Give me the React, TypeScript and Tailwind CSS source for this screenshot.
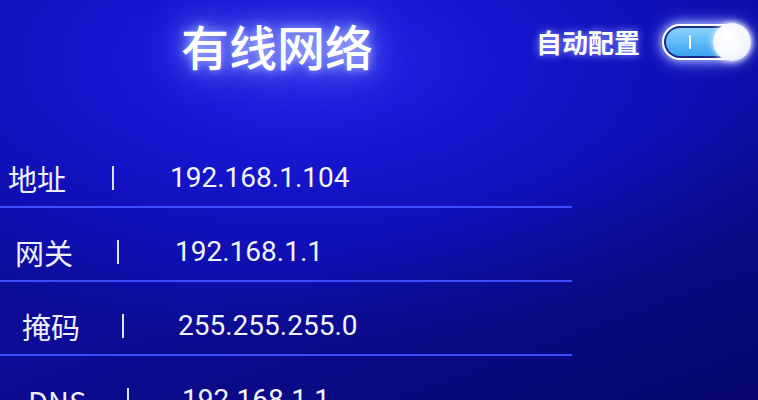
import React from "react";

const rows = [
  { label: "地址", value: "192.168.1.104", lw: "w-[112px]", lp: "pl-[8px]", vp: "pl-[56px]" },
  { label: "网关", value: "192.168.1.1", lw: "w-[117px]", lp: "pl-[15px]", vp: "pl-[56px]" },
  { label: "掩码", value: "255.255.255.0", lw: "w-[122px]", lp: "pl-[22px]", vp: "pl-[54px]" },
  { label: "DNS", value: "192.168.1.1", lw: "w-[127px]", lp: "pl-[28px]", vp: "pl-[53px]" },
];

export default function App() {
  return (
    <div
      className="relative w-[758px] h-[400px] overflow-hidden text-white bg-[radial-gradient(ellipse_75%_70%_at_40%_15%,#2828e6_0%,#1616d0_35%,#1010b8_65%,#0c0c96_100%)]"
      style={{ fontFamily: '"Noto Sans CJK SC", Roboto, "Noto Sans", sans-serif' }}
    >
      <div className="absolute inset-0 bg-[linear-gradient(160deg,rgba(0,0,0,0)_55%,rgba(0,0,50,0.4)_100%)]" />

      <div className="relative">
        {/* header */}
        <div className="flex items-start h-[150px]">
          <div className="w-[530px] flex justify-center pt-[12px] pl-[24px]">
            <span className="text-[48px] leading-[66px] font-medium tracking-[0px] [text-shadow:0_0_10px_#aab8ff,0_0_24px_#8090ff,0_0_44px_#6070ff]">
              有线网络
            </span>
          </div>
          <div className="flex items-center pt-[24px] pl-[6px] gap-[22px]">
            <span className="text-[26px] leading-[36px] font-bold [text-shadow:0_0_8px_#9aa8ff]">
              自动配置
            </span>
            <div className="relative w-[88px] h-[36px] rounded-full bg-white p-[2px] shadow-[0_0_10px_#b8c4ff,0_0_18px_#8090ff]">
              <div className="w-full h-full rounded-full bg-[#1a2a8a] p-[2px]">
                <div className="w-full h-full rounded-full bg-[linear-gradient(180deg,#8ad4ff,#3aa0f0)] flex items-center pl-[23px]">
                  <div className="w-[2px] h-[14px] bg-white rounded" />
                </div>
              </div>
              <div className="absolute right-[-1px] top-[-1px] w-[38px] h-[38px] rounded-full bg-[radial-gradient(circle_at_40%_40%,#ffffff_0%,#f4f6ff_60%,#d8dcf0_100%)] shadow-[0_0_6px_#ffffff]" />
            </div>
          </div>
        </div>

        {/* rows */}
        <div className="w-[572px] flex flex-col">
          {rows.map((r, i) => (
            <div key={i} className="flex flex-col">
              <div className="flex items-center h-[56px]">
                <span className={`${r.lw} ${r.lp} text-[29px] leading-[34px] text-[#eef0ff]`}>
                  {r.label}
                </span>
                <span className="w-[2px] h-[24px] bg-[#dde2ff]" />
                <span
                  className={`${r.vp} text-[28px] leading-[34px] text-[#f2f4ff]`}
                  style={{ fontFamily: 'Roboto, "Noto Sans", sans-serif' }}
                >
                  {r.value}
                </span>
              </div>
              {i < 3 && <div className="h-[2px] bg-[#3d4cff] mb-[16px]" />}
            </div>
          ))}
        </div>
      </div>
    </div>
  );
}
